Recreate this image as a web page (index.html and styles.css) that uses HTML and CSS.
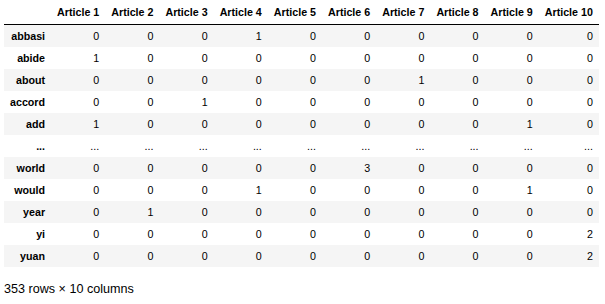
FILE: index.html
```html
<!DOCTYPE html>
<html>
<head>
<meta charset="utf-8">
<link rel="stylesheet" href="styles.css">
</head>
<body>
<div class="output">
<table class="dataframe">
<thead>
<tr><th></th><th>Article 1</th><th>Article 2</th><th>Article 3</th><th>Article 4</th><th>Article 5</th><th>Article 6</th><th>Article 7</th><th>Article 8</th><th>Article 9</th><th>Article 10</th></tr>
</thead>
<tbody>
<tr><th>abbasi</th><td>0</td><td>0</td><td>0</td><td>1</td><td>0</td><td>0</td><td>0</td><td>0</td><td>0</td><td>0</td></tr>
<tr><th>abide</th><td>1</td><td>0</td><td>0</td><td>0</td><td>0</td><td>0</td><td>0</td><td>0</td><td>0</td><td>0</td></tr>
<tr><th>about</th><td>0</td><td>0</td><td>0</td><td>0</td><td>0</td><td>0</td><td>1</td><td>0</td><td>0</td><td>0</td></tr>
<tr><th>accord</th><td>0</td><td>0</td><td>1</td><td>0</td><td>0</td><td>0</td><td>0</td><td>0</td><td>0</td><td>0</td></tr>
<tr><th>add</th><td>1</td><td>0</td><td>0</td><td>0</td><td>0</td><td>0</td><td>0</td><td>0</td><td>1</td><td>0</td></tr>
<tr><th>...</th><td>...</td><td>...</td><td>...</td><td>...</td><td>...</td><td>...</td><td>...</td><td>...</td><td>...</td><td>...</td></tr>
<tr><th>world</th><td>0</td><td>0</td><td>0</td><td>0</td><td>0</td><td>3</td><td>0</td><td>0</td><td>0</td><td>0</td></tr>
<tr><th>would</th><td>0</td><td>0</td><td>0</td><td>1</td><td>0</td><td>0</td><td>0</td><td>0</td><td>1</td><td>0</td></tr>
<tr><th>year</th><td>0</td><td>1</td><td>0</td><td>0</td><td>0</td><td>0</td><td>0</td><td>0</td><td>0</td><td>0</td></tr>
<tr><th>yi</th><td>0</td><td>0</td><td>0</td><td>0</td><td>0</td><td>0</td><td>0</td><td>0</td><td>0</td><td>2</td></tr>
<tr><th>yuan</th><td>0</td><td>0</td><td>0</td><td>0</td><td>0</td><td>0</td><td>0</td><td>0</td><td>0</td><td>2</td></tr>
</tbody>
</table>
<p class="shape">353 rows × 10 columns</p>
</div>
</body>
</html>
```
FILE: styles.css
```css
html, body {
  margin: 0;
  padding: 0;
  background: #fff;
}
.output {
  padding: 0 4px;
  font-family: "Liberation Sans", Arial, sans-serif;
  color: #000;
}
.dataframe {
  border-collapse: collapse;
  border-spacing: 0;
  font-size: 10.7px;
  color: #000;
}
.dataframe th,
.dataframe td {
  text-align: right;
  padding: 5px 6px;
  line-height: 12px;
  white-space: nowrap;
  vertical-align: middle;
}
.dataframe th {
  font-weight: bold;
}
.dataframe thead th {
  padding-top: 6px;
  padding-bottom: 6px;
  border-bottom: 1px solid #000;
}
.dataframe tbody tr:nth-child(odd) {
  background: #f5f5f5;
}
.shape {
  margin: 15px 0 0 0;
  font-size: 12.6px;
  line-height: 15px;
}
```
